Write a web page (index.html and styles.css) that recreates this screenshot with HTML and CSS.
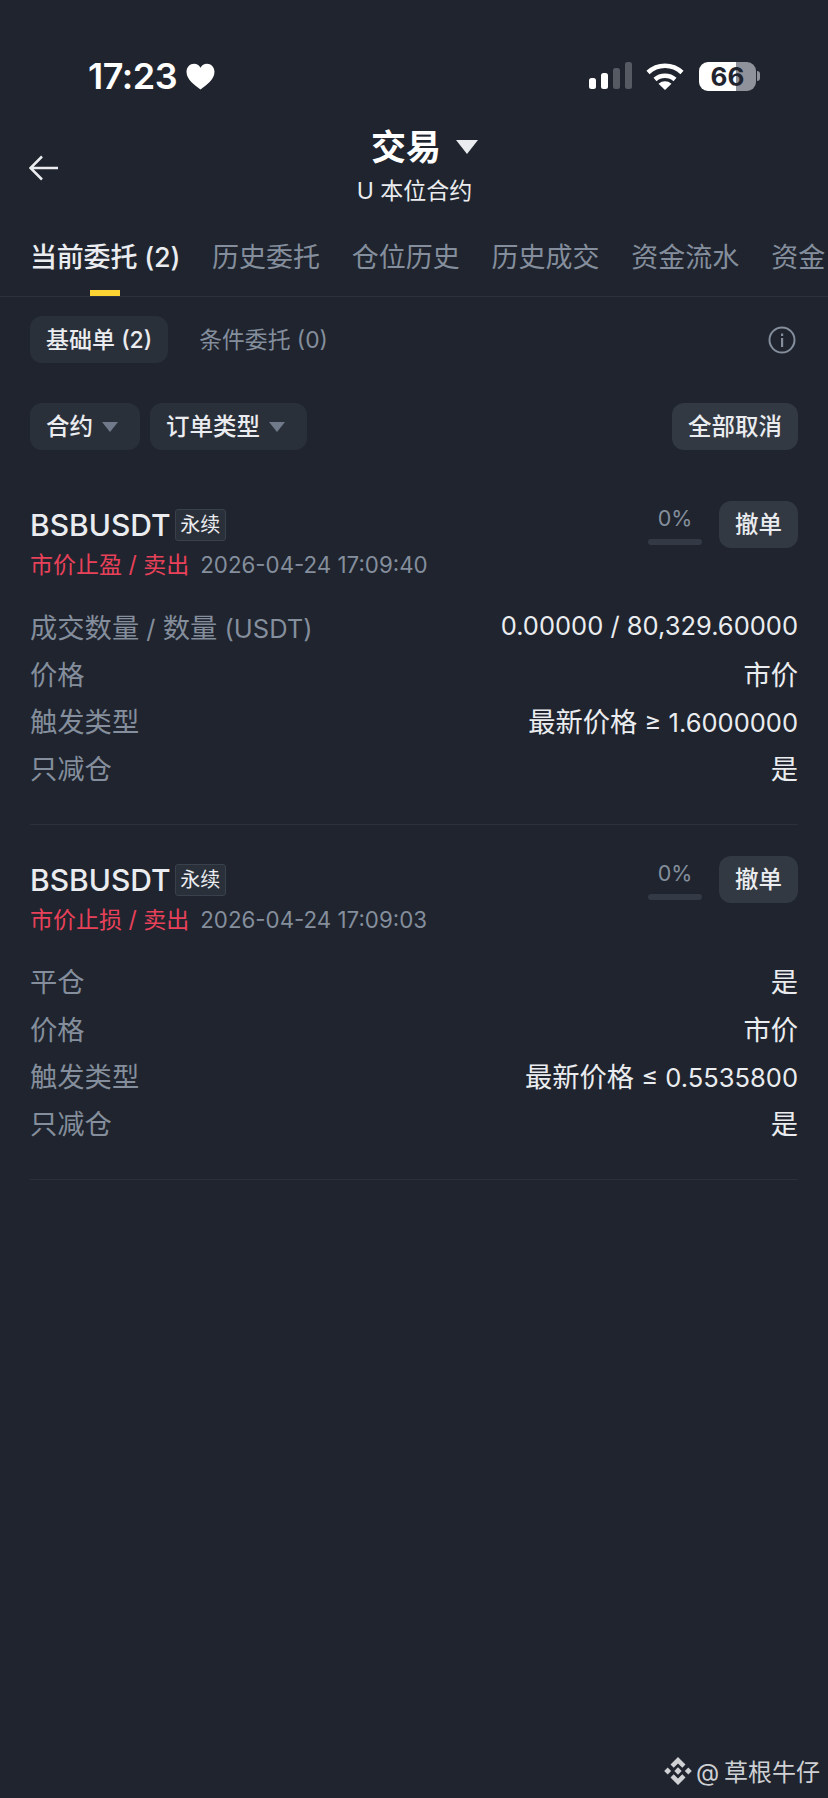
FILE: index.html
```html
<!DOCTYPE html>
<html lang="zh-CN">
<head>
	<meta charset="UTF-8">
	<title>交易</title>
	<link rel="stylesheet" href="styles.css">
</head>
<body>
	<div class="status">
		<span class="time">17:23</span>
		<svg class="heart" viewBox="0 0 30 28"><path d="M15 27.500C9 23 .5 17.500 .5 9.200 .5 4.300 4.100 .8 8.300 .8c2.900 0 5.300 1.500 6.700 4 1.400-2.500 3.800-4 6.700-4 4.200 0 7.800 3.500 7.800 8.400C29.500 17.500 21 23 15 27.500z"/></svg>
		<span class="spacer"></span>
		<svg class="signal" viewBox="0 0 43 28">
			<rect x="0" y="16" width="7" height="11" rx="2.500" fill="#fff"/>
			<rect x="12" y="11" width="7" height="16" rx="2.500" fill="#fff"/>
			<rect x="24" y="6" width="7" height="21" rx="2.500" fill="#555a63"/>
			<rect x="36" y="0" width="7" height="27" rx="2.500" fill="#555a63"/>
		</svg>
		<svg class="wifi" viewBox="0 0 38 28">
			<path d="M2 10.500C11.500 1.500 26.500 1.500 36 10.500" fill="none" stroke="#fff" stroke-width="4.500"/>
			<path d="M9 17.500C14.500 12.500 23.500 12.500 29 17.500" fill="none" stroke="#fff" stroke-width="4.500"/>
			<path d="M12.500 21.800C16.500 18.500 21.500 18.500 25.500 21.800L19 28z" fill="#fff"/>
		</svg>
		<span class="battery">66</span>
		<span class="nub"></span>
	</div>

	<header class="head">
		<svg class="back" viewBox="0 0 30 26"><path d="M29 13H2M13 1.500 1.500 13 13 24.500" fill="none" stroke="#eaecef" stroke-width="2.500"/></svg>
		<div class="head-mid">
			<div class="title">交易<i class="caret"></i></div>
			<div class="subtitle">U 本位合约</div>
		</div>
	</header>

	<nav class="tabs">
		<a class="tab on">当前委托 (2)<i></i></a>
		<a class="tab">历史委托<i></i></a>
		<a class="tab">仓位历史<i></i></a>
		<a class="tab">历史成交<i></i></a>
		<a class="tab">资金流水<i></i></a>
		<a class="tab">资金<i></i></a>
	</nav>

	<section class="subtabs">
		<span class="pill small">基础单 (2)</span>
		<span class="plain">条件委托 (0)</span>
		<span class="spacer"></span>
		<svg class="info" viewBox="0 0 28 28">
			<circle cx="14" cy="14" r="12.500" fill="none" stroke="#848e9c" stroke-width="2"/>
			<rect x="13" y="12" width="2.200" height="9" fill="#848e9c"/>
			<rect x="13" y="7.500" width="2.200" height="2.500" fill="#848e9c"/>
		</svg>
	</section>

	<section class="filters">
		<span class="pill drop">合约<i class="arrow"></i></span>
		<span class="pill drop">订单类型<i class="arrow"></i></span>
		<span class="spacer"></span>
		<span class="pill btn">全部取消</span>
	</section>

	<article class="order">
		<div class="top">
			<div class="top-left">
				<div class="sym">BSBUSDT<span class="tag">永续</span></div>
				<div class="meta"><span class="red">市价止盈 / 卖出</span><span class="date">2026-04-24 17:09:40</span></div>
			</div>
			<div class="progress">0%<i></i></div>
			<span class="pill btn">撤单</span>
		</div>
		<div class="row"><span>成交数量<em> / </em>数量<em> (USDT)</em></span><b><em>0.00000 / 80,329.60000</em></b></div>
		<div class="row"><span>价格</span><b>市价</b></div>
		<div class="row"><span>触发类型</span><b>最新价格<em> ≥ 1.6000000</em></b></div>
		<div class="row"><span>只减仓</span><b>是</b></div>
	</article>

	<article class="order">
		<div class="top">
			<div class="top-left">
				<div class="sym">BSBUSDT<span class="tag">永续</span></div>
				<div class="meta"><span class="red">市价止损 / 卖出</span><span class="date">2026-04-24 17:09:03</span></div>
			</div>
			<div class="progress">0%<i></i></div>
			<span class="pill btn">撤单</span>
		</div>
		<div class="row"><span>平仓</span><b>是</b></div>
		<div class="row"><span>价格</span><b>市价</b></div>
		<div class="row"><span>触发类型</span><b>最新价格<em> ≤ 0.5535800</em></b></div>
		<div class="row"><span>只减仓</span><b>是</b></div>
	</article>

	<div class="mark">
		<svg viewBox="0 0 28 28">
			<path d="M14 0 21.500 7.500 18.300 10.700 14 6.400 9.700 10.700 6.500 7.500z"/>
			<path d="M14 28 21.500 20.500 18.300 17.300 14 21.600 9.700 17.300 6.500 20.500z"/>
			<path d="M14 10.300 17.700 14 14 17.700 10.300 14z"/>
			<path d="M3.700 10.500 7.200 14 3.700 17.500 .2 14z"/>
			<path d="M24.300 10.500 27.800 14 24.300 17.500 20.800 14z"/>
		</svg>
		<span>@ 草根牛仔</span>
	</div>
</body>
</html>
```

FILE: styles.css
```css
* {
	box-sizing: border-box;
}
html, body {
	margin: 0;
	height: 100%;
}
body {
	background: #1f242e;
	color: #eaecef;
	font-family: "Inter", "Noto Sans CJK SC", sans-serif;
	height: 1798px;
	overflow: hidden;
	position: relative;
	width: 828px;
}
.spacer {
	flex: 1;
}

/* status bar */
.status {
	align-items: center;
	display: flex;
	height: 40px;
	margin-top: 56px;
	padding: 0 68px 0 88px;
}
.time {
	color: #fff;
	font-size: 36px;
	font-weight: 600;
	letter-spacing: -0.5px;
}
.heart {
	fill: #fff;
	height: 27px;
	margin-left: 9px;
	width: 29px;
}
.signal {
	height: 28px;
	width: 43px;
}
.wifi {
	height: 28px;
	margin-left: 14px;
	width: 38px;
}
.battery {
	background: linear-gradient(90deg, #fff 0, #fff 65%, #8f929a 65%);
	border-radius: 9px;
	color: #1f242e;
	font-size: 26px;
	font-weight: 700;
	height: 29px;
	line-height: 29px;
	margin-left: 15px;
	text-align: center;
	width: 57px;
}
.nub {
	background: #8f929a;
	border-radius: 0 3px 3px 0;
	height: 10px;
	margin-left: 1px;
	width: 3px;
}

/* header */
.head {
	align-items: center;
	display: grid;
	grid-template-columns: 100px 1fr 100px;
	margin-top: 29px;
	padding-left: 29px;
}
.back {
	height: 26px;
	margin-top: 5px;
	width: 30px;
}
.head-mid {
	margin-left: -28px;
	text-align: center;
}
.title {
	align-items: center;
	color: #fff;
	display: flex;
	font-size: 35px;
	font-weight: 700;
	justify-content: center;
	line-height: 44px;
	padding-left: 20px;
}
.caret {
	border-left: 11px solid transparent;
	border-right: 11px solid transparent;
	border-top: 14px solid #eaecef;
	margin-left: 15px;
}
.subtitle {
	font-size: 23px;
	line-height: 30px;
	margin-top: 7px;
}

/* tabs */
.tabs {
	border-bottom: 1px solid #2b3139;
	display: flex;
	gap: 31.800px;
	height: 57px;
	margin-top: 34px;
	overflow: hidden;
	padding-left: 30px;
}
.tab {
	align-items: center;
	color: #848e9c;
	display: flex;
	flex-direction: column;
	flex-shrink: 0;
	font-size: 27px;
	line-height: 36px;
}
.tab i {
	height: 6px;
	margin-top: 14px;
	width: 30px;
}
.tab.on {
	color: #eaecef;
	font-weight: 500;
	letter-spacing: -0.2px;
}
.tab.on i {
	background: #fcd535;
}

/* filter rows */
.subtabs, .filters {
	align-items: center;
	display: flex;
	padding: 0 30px;
}
.subtabs {
	margin-top: 19px;
}
.filters {
	gap: 10px;
	margin-top: 40px;
}
.pill {
	align-items: center;
	background: #2a303a;
	border-radius: 12px;
	color: #eaecef;
	display: flex;
	font-size: 23.500px;
	font-weight: 500;
	height: 47px;
	padding: 0 16px 3px;
}
.pill.small {
	font-size: 23px;
}
.drop {
	padding-right: 22px;
}
.plain {
	color: #848e9c;
	font-size: 22.800px;
	margin: 0 0 3px 31px;
}
.info {
	height: 28px;
	margin-right: 2px;
	width: 28px;
}
.arrow {
	border-left: 8px solid transparent;
	border-right: 8px solid transparent;
	border-top: 10px solid #707a8a;
	margin: 3px 0 0 9px;
}
.btn {
	background: #323942;
}

/* orders */
.filters + .order {
	margin-top: 20px;
}
.order {
	border-bottom: 1px solid #2b3139;
	margin: 0 30px;
	padding: 31px 0 33px;
}
.top {
	display: flex;
	margin-bottom: 21px;
}
.top-left {
	flex: 1;
}
.sym {
	align-items: center;
	color: #eaecef;
	display: flex;
	font-size: 30px;
	font-weight: 500;
	height: 48px;
}
.tag {
	background: #2a303a;
	border: 1px solid #3a414c;
	border-radius: 3px;
	font-size: 20px;
	font-weight: 400;
	height: 32px;
	line-height: 30px;
	margin-left: 4px;
	text-align: center;
	width: 51px;
}
.meta {
	font-size: 23px;
	line-height: 32px;
}
.red {
	color: #e8415a;
}
.date {
	color: #848e9c;
	font-size: 22.300px;
	margin-left: 11px;
}
.progress {
	align-items: center;
	color: #848e9c;
	display: flex;
	flex-direction: column;
	font-size: 21.500px;
	line-height: 34px;
	margin-right: 17px;
	width: 54px;
}
.progress i {
	background: #333a45;
	border-radius: 3px;
	height: 6px;
	margin-top: 4px;
	width: 54px;
}
.row {
	align-items: center;
	color: #848e9c;
	display: flex;
	font-size: 27.300px;
	height: 47.200px;
	justify-content: space-between;
}
.row b {
	color: #eaecef;
	font-weight: 400;
}
.row em {
	font-size: 25.500px;
	font-style: normal;
}

/* watermark */
.mark {
	align-items: center;
	bottom: 10px;
	color: #cfd1d4;
	display: flex;
	font-size: 24px;
	gap: 4px;
	position: absolute;
	right: 8px;
	word-spacing: -2px;
}
.mark svg {
	fill: #cfd1d4;
	height: 28px;
	width: 28px;
}
```
